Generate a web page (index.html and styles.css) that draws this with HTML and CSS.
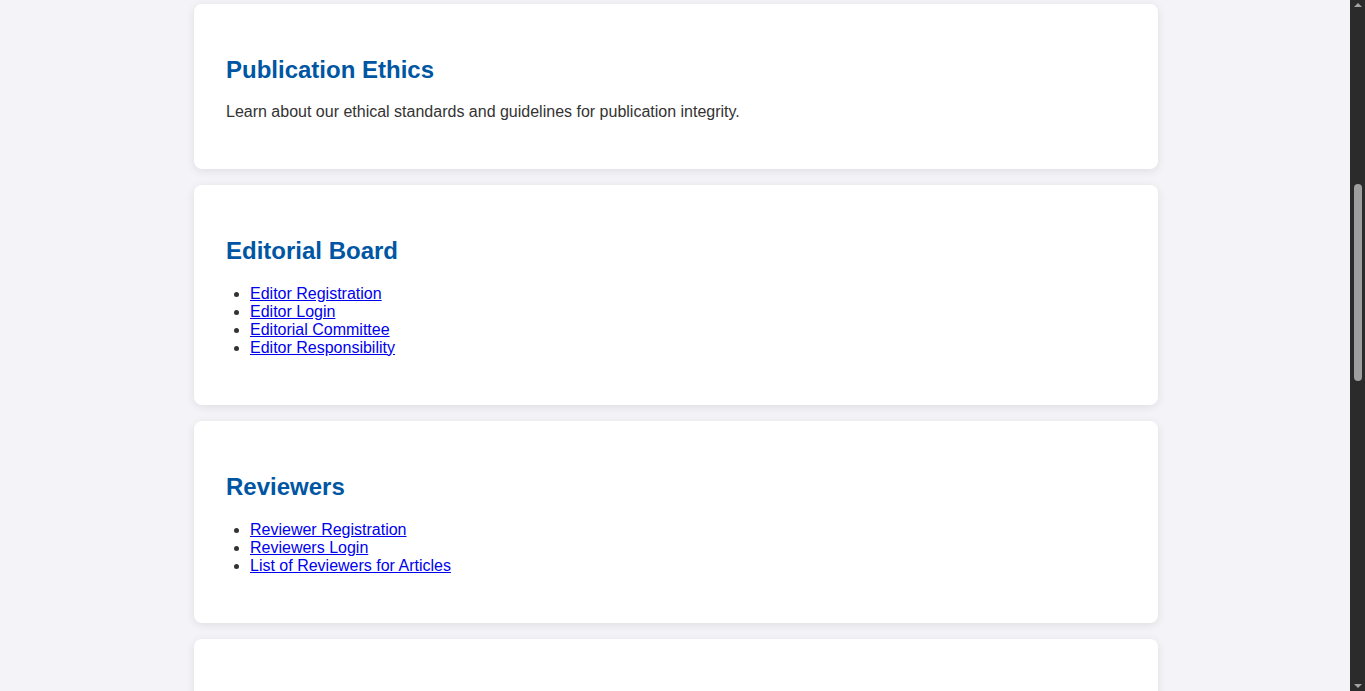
FILE: index.html
```html
<!DOCTYPE html>
<html lang="en">
<head>
<meta charset="utf-8">
<title>Journal</title>
<link rel="stylesheet" href="styles.css">
</head>
<body>
<main class="page">
  <section class="card">
    <h2 class="card-title">Publication Ethics</h2>
    <p class="card-text">Learn about our ethical standards and guidelines for publication integrity.</p>
  </section>
  <section class="card">
    <h2 class="card-title">Editorial Board</h2>
    <ul class="card-list">
      <li><a href="#">Editor Registration</a></li>
      <li><a href="#">Editor Login</a></li>
      <li><a href="#">Editorial Committee</a></li>
      <li><a href="#">Editor Responsibility</a></li>
    </ul>
  </section>
  <section class="card">
    <h2 class="card-title">Reviewers</h2>
    <ul class="card-list">
      <li><a href="#">Reviewer Registration</a></li>
      <li><a href="#">Reviewers Login</a></li>
      <li><a href="#">List of Reviewers for Articles</a></li>
    </ul>
  </section>
  <section class="card card-partial"></section>
</main>

<div class="scrollbar" aria-hidden="true">
  <span class="scroll-arrow scroll-arrow-up"></span>
  <span class="scroll-track"><span class="scroll-thumb"></span></span>
  <span class="scroll-arrow scroll-arrow-down"></span>
</div>
</body>
</html>
```

FILE: styles.css
```css
html {
  background: #f4f4f8;
}

body {
  margin: 0;
  padding: 0 15px 0 0;
  height: 691px;
  overflow: hidden;
  background: #f4f4f8;
  color: #333333;
  font-family: "Liberation Sans", Arial, sans-serif;
  font-size: 16px;
}

.page {
  width: 964px;
  margin: 0 auto;
  padding: 4px 0 0 2px;
  display: flex;
  flex-direction: column;
  gap: 16px;
}

.card {
  background: #ffffff;
  border-radius: 8px;
  padding: 32px;
  box-shadow: 0 2px 10px rgba(0, 0, 0, 0.09);
}

.card-partial {
  min-height: 200px;
}

.card-title {
  color: #0056a3;
  font-size: 24px;
  font-weight: bold;
  margin: 0.83em 0;
}

.card-text {
  margin: -1px 0 16px;
  color: #333333;
}

.card-list {
  margin: 16px 0 16.5px;
  padding-left: 24px;
  color: #333333;
}

.card-list a {
  color: #0000ee;
}

/* overlay replica of the browser's dark scrollbar */
.scrollbar {
  position: fixed;
  top: 0;
  right: 0;
  width: 15px;
  height: 691px;
  background: #2b2b2b;
  display: flex;
  flex-direction: column;
  align-items: center;
}

.scroll-arrow {
  width: 15px;
  height: 15px;
  flex: none;
  display: flex;
  align-items: center;
  justify-content: center;
}

.scroll-arrow::before {
  content: "";
  width: 0;
  height: 0;
  border-left: 4px solid transparent;
  border-right: 4px solid transparent;
}

.scroll-arrow-up::before {
  border-bottom: 4px solid #a3a3a3;
  margin-top: -5px;
}

.scroll-arrow-down::before {
  border-top: 4px solid #a3a3a3;
  margin-top: 5px;
}

.scroll-track {
  flex: 1;
  width: 15px;
  display: flex;
  justify-content: center;
  padding-top: 169px;
}

.scroll-thumb {
  width: 8px;
  height: 197px;
  border-radius: 4px;
  background: #9f9f9f;
}
```
